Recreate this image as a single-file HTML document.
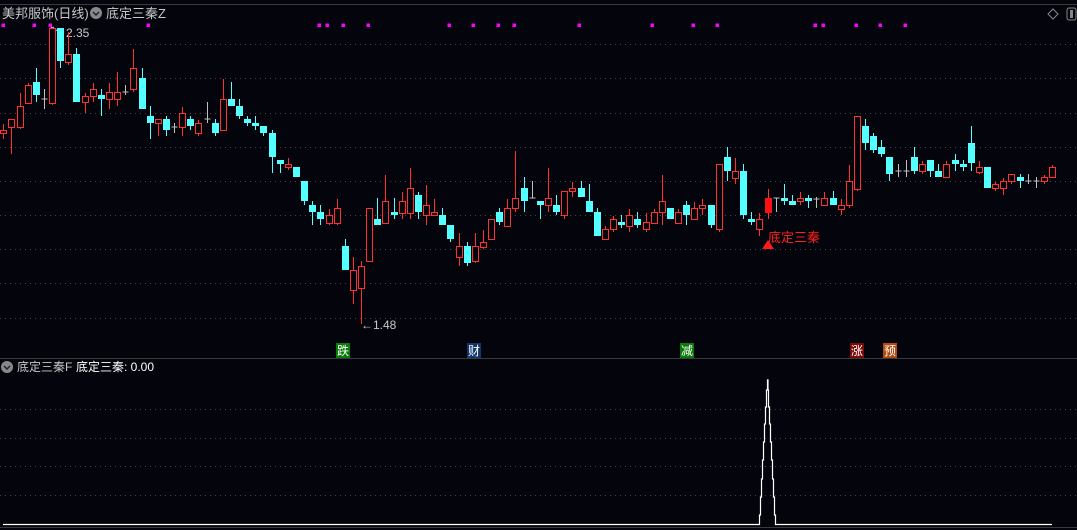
<!DOCTYPE html>
<html><head><meta charset="utf-8"><style>
html,body{margin:0;padding:0;background:#04040c;width:1077px;height:530px;overflow:hidden}
svg{display:block}
text{font-family:"Liberation Sans","Noto Sans CJK SC",sans-serif}
</style></head><body>
<svg id="s" width="1077" height="530" xmlns="http://www.w3.org/2000/svg">
<rect width="1077" height="530" fill="#04040c"/>
<line x1="0" y1="4.5" x2="1077" y2="4.5" stroke="#3a3a3a"/>
<g stroke="#444" stroke-dasharray="1 4">
<line x1="0" y1="44.5" x2="1077" y2="44.5"/><line x1="0" y1="78.5" x2="1077" y2="78.5"/>
<line x1="0" y1="113.5" x2="1077" y2="113.5"/><line x1="0" y1="147.5" x2="1077" y2="147.5"/>
<line x1="0" y1="181.5" x2="1077" y2="181.5"/><line x1="0" y1="215.5" x2="1077" y2="215.5"/>
<line x1="0" y1="249.5" x2="1077" y2="249.5"/><line x1="0" y1="283.5" x2="1077" y2="283.5"/>
<line x1="0" y1="318.5" x2="1077" y2="318.5"/>
<line x1="0" y1="409.5" x2="1077" y2="409.5"/><line x1="0" y1="438.5" x2="1077" y2="438.5"/>
<line x1="0" y1="466.5" x2="1077" y2="466.5"/><line x1="0" y1="495.5" x2="1077" y2="495.5"/>
</g>
<line x1="0" y1="358.5" x2="1077" y2="358.5" stroke="#3a3a3a"/>
<line x1="0" y1="527.5" x2="1077" y2="527.5" stroke="#3a3a3a"/>
<text x="2" y="18" font-size="13" fill="#c8c8c8">美邦服饰(日线)</text>
<circle cx="96" cy="13" r="6" fill="#888"/><path d="M93 12 L96 15 L99 12" stroke="#222" stroke-width="1.5" fill="none"/>
<text x="106" y="18" font-size="13" fill="#c8c8c8">底定三秦Z</text>
<path d="M1053 9 L1058 14 L1053 19 L1048 14 Z" stroke="#888" fill="none"/>
<rect x="1067" y="8" width="9" height="12" rx="2" stroke="#888" fill="none"/><rect x="1070" y="10" width="3" height="8" fill="#888"/>
<text x="66" y="37" font-size="12" fill="#c8c8c8">2.35</text>
<path d="M52 28 L62 33" stroke="#c8c8c8"/><path d="M50 26 L52 28 L54 27" stroke="#c8c8c8" fill="none"/>
<text x="361" y="329" font-size="12" fill="#c8c8c8">←1.48</text>
<g id="c"></g>
<path d="M762 249 L768 240 L774 249 Z" fill="#ff1a1a"/>
<text x="768" y="242" font-size="13" fill="#ff2020">底定三秦</text>
<rect x="336" y="343" width="14" height="15" fill="#0a7a0a"/><text x="337" y="355" font-size="12" fill="#fff">跌</text>
<rect x="467" y="343" width="14" height="15" fill="#12366a"/><text x="468" y="355" font-size="12" fill="#fff">财</text>
<rect x="680" y="343" width="14" height="15" fill="#0a7a0a"/><text x="681" y="355" font-size="12" fill="#fff">减</text>
<rect x="850" y="343" width="14" height="15" fill="#7a0a0a"/><text x="851" y="355" font-size="12" fill="#fff">涨</text>
<rect x="883" y="343" width="14" height="15" fill="#b04a10"/><text x="884" y="355" font-size="12" fill="#fff">预</text>
<circle cx="7" cy="367" r="6" fill="#888"/><path d="M4 366 L7 369 L10 366" stroke="#222" stroke-width="1.5" fill="none"/>
<text x="17" y="371" font-size="12" fill="#c8c8c8">底定三秦F</text>
<text x="76" y="371" font-size="12" fill="#fff">底定三秦: 0.00</text>
<path d="M3 524.5 L759.5 524.5 L759.5 515 L760.5 515 L760.5 497 L761.5 497 L761.5 479 L762.5 479 L762.5 460 L763.5 460 L763.5 442 L764.5 442 L764.5 424 L765.5 424 L765.5 407 L766.5 407 L766.5 390 L767.5 390 L767.5 380 L768 380 L768 390 L768.5 390 L768.5 407 L769.5 407 L769.5 424 L770.5 424 L770.5 442 L771.5 442 L771.5 460 L772.5 460 L772.5 479 L773.5 479 L773.5 497 L774.5 497 L774.5 515 L775.5 515 L775.5 524.5 L1052 524.5" stroke="#fff" stroke-width="1.2" fill="none"/>
</svg>
<script>
var D=[[130,133,124,139,'r'],[119,127,119,154,'r'],[106,127,93,129,'r'],[85,103,83,103,'r'],[82,95,68,102,'c'],[99,99,89,109,'w'],[28,103,28,105,'r'],[28,61,28,68,'c'],[54,62,32,65,'r'],[54,102,48,102,'c'],
[96,102,93,113,'r'],[89,96,83,102,'r'],[95,99,89,116,'c'],[92,99,83,109,'r'],[92,99,72,106,'r'],[92,92,85,95,'w'],[68,89,49,92,'r'],[78,109,68,109,'c'],[116,123,106,139,'c'],[119,123,119,136,'r'],
[119,130,116,136,'c'],[127,127,123,133,'w'],[113,127,107,136,'r'],[119,126,116,130,'c'],[123,133,120,136,'r'],[119,119,102,123,'w'],[123,133,119,136,'c'],[99,130,79,130,'r'],[99,106,82,106,'c'],[106,116,99,119,'c'],
[119,123,116,126,'c'],[123,126,116,130,'c'],[126,133,126,136,'c'],[133,157,130,173,'c'],[160,164,160,173,'c'],[164,167,158,170,'r'],[167,177,167,177,'c'],[181,201,181,205,'c'],[205,212,201,225,'c'],[212,219,205,225,'c'],
[215,223,209,225,'r'],[208,223,199,225,'r'],[246,270,239,270,'c'],[270,290,257,304,'r'],[266,288,261,324,'r'],[208,261,208,261,'r'],[219,225,198,225,'c'],[201,223,175,223,'r'],[212,215,198,219,'c'],[201,213,192,219,'r'],
[188,213,168,219,'r'],[195,212,192,219,'c'],[205,215,185,225,'r'],[212,215,199,215,'r'],[215,225,208,225,'c'],[225,239,225,242,'c'],[246,257,233,266,'r'],[246,263,242,266,'c'],[246,261,233,263,'r'],[242,247,230,249,'r'],
[219,239,219,239,'r'],[212,222,208,225,'c'],[208,226,199,226,'r'],[198,208,151,212,'r'],[188,201,177,212,'c'],[198,198,181,198,'w'],[201,205,201,219,'c'],[198,205,168,212,'r'],[205,212,195,215,'c'],[191,215,191,219,'r'],
[188,191,182,197,'r'],[188,197,181,197,'c'],[201,212,184,212,'c'],[212,236,208,236,'c'],[229,239,226,239,'r'],[219,229,216,232,'r'],[222,225,215,228,'c'],[215,226,209,232,'r'],[219,225,212,228,'c'],[222,229,213,232,'r'],
[212,223,209,223,'r'],[201,212,175,225,'r'],[208,219,208,219,'c'],[212,223,209,223,'r'],[205,215,201,225,'c'],[208,219,202,219,'r'],[205,208,199,215,'r'],[205,225,205,228,'c'],[164,229,164,232,'r'],[157,171,147,181,'c'],
[171,178,158,184,'r'],[171,215,164,219,'c'],[219,222,212,225,'c'],[219,229,213,236,'r'],[198,213,189,219,'R'],[198,198,198,212,'w'],[198,201,184,205,'c'],[201,205,195,205,'c'],[198,201,192,205,'r'],[198,201,195,208,'c'],
[199,199,197,208,'w'],[198,205,192,205,'r'],[198,205,191,205,'c'],[205,209,199,215,'r'],[181,205,165,208,'r'],[116,189,116,191,'r'],[126,143,119,150,'c'],[136,150,133,153,'c'],[147,154,140,157,'c'],[157,174,157,181,'c'],
[171,171,164,177,'w'],[171,171,160,177,'w'],[157,171,147,174,'c'],[164,171,161,174,'r'],[160,171,160,177,'c'],[171,177,164,177,'c'],[164,177,161,177,'r'],[160,164,154,171,'c'],[164,167,160,171,'c'],[143,163,126,171,'c'],
[167,172,161,174,'r'],[167,188,167,188,'c'],[184,188,182,191,'r'],[181,188,178,195,'r'],[174,181,174,184,'r'],[177,181,174,188,'c'],[181,181,174,184,'w'],[181,181,177,188,'w'],[177,181,175,184,'r'],[167,177,165,177,'r']];
var s='';
D.forEach(function(d,i){
 var x=Math.round(3.3+8.13*i)+0.5,t=d[0],b=d[1],h=d[2],l=d[3],k=d[4];
 var col=k=='c'?'#54ffff':(k=='w'?'#c0c0c0':'#ff3030');
 s+='<line x1="'+x+'" y1="'+h+'" x2="'+x+'" y2="'+l+'" stroke="'+col+'"/>';
 if(k=='w'){s+='<line x1="'+(x-3)+'" y1="'+t+'" x2="'+(x+3)+'" y2="'+t+'" stroke="'+col+'"/>';}
 else if(k=='r'){var hh=Math.max(b-t,2);s+='<rect x="'+(x-3)+'" y="'+(t+0.5)+'" width="6" height="'+hh+'" fill="#04040c" stroke="'+col+'"/>';}
 else{var hh=Math.max(b-t,2);s+='<rect x="'+(x-3.5)+'" y="'+t+'" width="7" height="'+hh+'" fill="'+(k=='R'?'#ff1010':col)+'"/>';}
});
[3,34,50,148,319,327,343,368,449,473,498,514,579,652,693,717,815,823,856,880,905].forEach(function(x){s+='<rect x="'+(x-1.5)+'" y="23.5" width="3.5" height="3.5" fill="#ff00ff"/>';});
document.getElementById('c').innerHTML=s;
</script>
</body></html>
